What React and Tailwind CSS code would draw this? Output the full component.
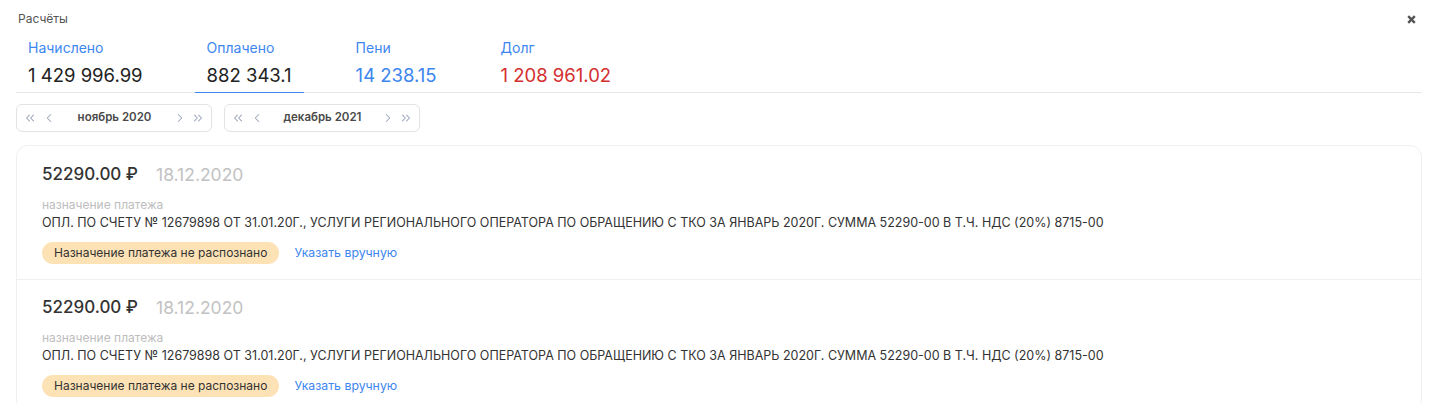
import { ChevronLeft, ChevronRight, ChevronsLeft, ChevronsRight } from "lucide-react";

const tabs = [
  { label: "Начислено", value: "1 429 996.99", color: "text-[#222]" },
  { label: "Оплачено", value: "882 343.1", color: "text-[#222]", active: true },
  { label: "Пени", value: "14 238.15", color: "text-[#3d86f0]" },
  { label: "Долг", value: "1 208 961.02", color: "text-[#d32f2f]" },
];

const payments = [
  {
    amount: "52290.00 ₽",
    date: "18.12.2020",
    text: "ОПЛ. ПО СЧЕТУ № 12679898 ОТ 31.01.20Г., УСЛУГИ РЕГИОНАЛЬНОГО ОПЕРАТОРА ПО ОБРАЩЕНИЮ С ТКО ЗА ЯНВАРЬ 2020Г. СУММА 52290-00 В Т.Ч. НДС (20%) 8715-00",
  },
  {
    amount: "52290.00 ₽",
    date: "18.12.2020",
    text: "ОПЛ. ПО СЧЕТУ № 12679898 ОТ 31.01.20Г., УСЛУГИ РЕГИОНАЛЬНОГО ОПЕРАТОРА ПО ОБРАЩЕНИЮ С ТКО ЗА ЯНВАРЬ 2020Г. СУММА 52290-00 В Т.Ч. НДС (20%) 8715-00",
  },
];

function MonthPicker({ label }) {
  return (
    <div className="flex items-center w-[196px] h-[28px] border border-[#e3e3e3] rounded-md px-[6px] text-[#9ba6bb]">
      <ChevronsLeft size={14} strokeWidth={1.8} />
      <ChevronLeft size={14} strokeWidth={1.8} className="ml-[5px]" />
      <span className="flex-1 text-center text-[11.5px] font-semibold text-[#4a4a4a]">{label}</span>
      <ChevronRight size={14} strokeWidth={1.8} />
      <ChevronsRight size={14} strokeWidth={1.8} className="ml-[4px]" />
    </div>
  );
}

export default function App() {
  return (
    <div className="min-h-screen bg-white pl-4 pr-[9px] font-['Inter',sans-serif]">
      {/* Header */}
      <div className="flex items-center justify-between h-[38px] pl-[2px] pr-[6px]">
        <span className="text-[12px] text-[#555]">Расчёты</span>
        <svg width="9" height="9" viewBox="0 0 9 9" className="text-[#555]">
          <path d="M1.2 1.2l6.6 6.6M7.8 1.2L1.2 7.8" stroke="currentColor" strokeWidth="2.4" />
        </svg>
      </div>

      {/* Tabs */}
      <div className="flex gap-10 border-b border-[#e6e6e6]">
        {tabs.map((t) => (
          <div
            key={t.label}
            className={`px-3 pt-[1px] pb-[5px] -mb-px border-b ${t.active ? "border-[#3d86f0]" : "border-transparent"}`}
          >
            <div className="text-[14px] leading-[18px] text-[#3d86f0]">{t.label}</div>
            <div className={`text-[18.5px] leading-[24px] mt-[6px] ${t.color}`}>{t.value}</div>
          </div>
        ))}
      </div>

      {/* Period */}
      <div className="flex gap-3 mt-[11px]">
        <MonthPicker label="ноябрь 2020" />
        <MonthPicker label="декабрь 2021" />
      </div>

      {/* Payments */}
      <div className="mt-[13px] border border-[#f0f0f0] rounded-xl">
        {payments.map((p, i) => (
          <div
            key={i}
            className={`px-[25px] pb-[15px] ${i > 0 ? "pt-[17px] border-t border-[#f0f0f0]" : "pt-[18px]"}`}
          >
            <div className="flex items-center gap-[18px] h-[22px]">
              <span className="text-[17px] font-medium text-[#333]">{p.amount}</span>
              <span className="text-[17.5px] text-[#c2c2c2]">{p.date}</span>
            </div>
            <div className="mt-[11px] text-[12px] leading-[15px] text-[#bdbdbd]">назначение платежа</div>
            <div className="mt-[3px] text-[12.5px] leading-[16px] text-[#333]">{p.text}</div>
            <div className="flex items-center gap-[15px] mt-[11px]">
              <span className="h-[22px] flex items-center px-[12px] rounded-full bg-[#fde2b6] text-[12px] text-[#333]">
                Назначение платежа не распознано
              </span>
              <span className="text-[12.3px] text-[#3d86f0]">Указать вручную</span>
            </div>
          </div>
        ))}
      </div>
    </div>
  );
}
